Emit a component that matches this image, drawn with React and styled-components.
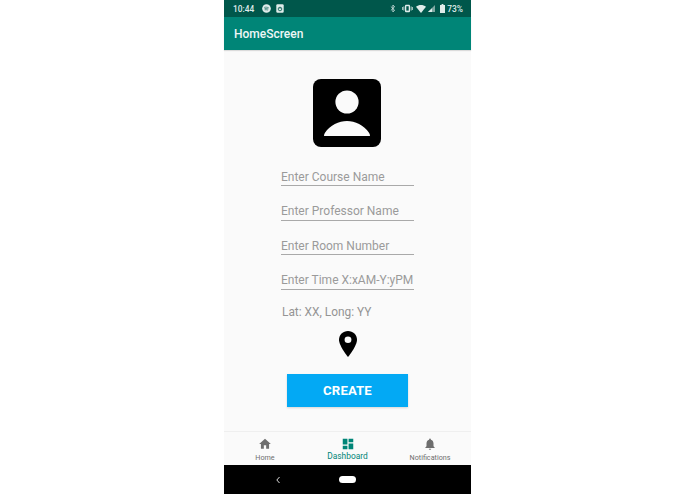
import React from "react";
import styled, { createGlobalStyle } from "styled-components";

const Global = createGlobalStyle`
  html, body { margin: 0; padding: 0; background: #fff; }
  body { font-family: Roboto, "Liberation Sans", sans-serif; }
`;
const Page = styled.div`
  width: 695px; height: 494px; display: flex; justify-content: center; overflow: hidden; background: #fff;
`;
const Phone = styled.div`
  width: 247px; height: 494px; display: flex; flex-direction: column; background: #fafafa;
`;
const StatusBar = styled.div`
  height: 17px; background: #00574b; display: flex; align-items: center; justify-content: space-between;
  padding: 0 8px 0 9px; color: #dfecea; font-size: 8.4px; font-weight: 500; flex: none;
`;
const StatusGroup = styled.div`
  display: flex; align-items: center; gap: ${p => p.$gap || 4}px;
`;
const Clock = styled.span`
  margin-right: 3px;
`;
const AppBar = styled.div`
  height: 33px; background: #008577; color: #eef7f6; display: flex; align-items: center;
  padding-left: 10px; font-size: 12px; font-weight: 500; flex: none;
  box-shadow: 0 1px 1px rgba(0,0,0,.12);
`;
const Content = styled.div`
  flex: 1; display: flex; flex-direction: column; align-items: center; padding-top: 29px; min-height: 0;
`;
const Avatar = styled.svg`
  width: 68px; height: 68px; display: block; margin: 0 1px 21px 0;
`;
const Form = styled.div`
  width: 133px; display: flex; flex-direction: column; gap: 16px;
`;
const Field = styled.div`
  height: 17.4px; border-bottom: 1.3px solid #a9a9a9; color: #9a9a9a; font-size: 12px; line-height: 18px;
  white-space: nowrap; box-sizing: content-box;
`;
const LatLong = styled.div`
  width: 132px; padding-left: 1px; margin-top: 14px; height: 16px; line-height: 16px; color: #949494; font-size: 11.9px;
`;
const Pin = styled.svg`
  width: 18px; height: 26px; display: block; margin-top: 11px;
`;
const CreateButton = styled.button`
  width: 121px; height: 33px; margin-top: 17px; border: none; border-radius: 0; background: #03a9f4; color: #fff;
  font-family: inherit; font-weight: 700; font-size: 13.2px; letter-spacing: 0.1px; padding: 1px 0 0;
  box-shadow: 0 1px 2px rgba(0,0,0,.15);
`;
const BottomNav = styled.div`
  height: 34px; flex: none; display: grid; grid-template-columns: 82px 83px 82px; background: #fafafa;
  border-top: 1px solid #efefef; box-sizing: border-box;
`;
const NavItem = styled.div`
  display: flex; flex-direction: column; align-items: center; padding-top: 5px;
  color: ${p => (p.$active ? "#008577" : "#6e6e6e")};
`;
const NavIcon = styled.svg`
  width: 14px; height: 14px; display: block; fill: currentColor;
`;
const NavLabel = styled.span`
  font-size: ${p => (p.$active ? "8.4px" : "7.2px")}; line-height: 9px; margin-top: ${p => (p.$active ? "1px" : "2px")}; white-space: nowrap;
`;
const SystemBar = styled.div`
  height: 29px; flex: none; background: #000; display: flex; align-items: center; position: relative; padding-left: 51px; gap: 58px;
`;
const Back = styled.svg`
  width: 6px; height: 8px; display: block;
`;
const HomePill = styled.div`
  width: 17px; height: 7px; border-radius: 4px; background: #fff;
`;

const Ic = styled.svg`
  display: block; fill: #dfecea; margin-left: ${p => p.$ml || 0}px;
`;

export default function App() {
  return (
    <Page>
      <Global />
      <Phone>
        <StatusBar>
          <StatusGroup $gap={5}>
            <Clock>10:44</Clock>
            <Ic width="9" height="9" viewBox="0 0 10 10"><circle cx="5" cy="5" r="4.8" /><path d="M2.500 3.800c1.800-.5 3.400-.3 5 .5M2.800 5.200c1.500-.4 2.900-.2 4.200.4M3 6.500c1.200-.3 2.300-.2 3.400.3" stroke="#00574b" strokeWidth=".7" fill="none" /></Ic>
            <Ic width="8" height="9" viewBox="0 0 8 9"><rect x=".3" y=".3" width="7.400" height="8.400" rx="1.200" /><circle cx="4" cy="5" r="1.800" fill="none" stroke="#00574b" strokeWidth=".8" /><path d="M4 5V3.500" stroke="#00574b" strokeWidth=".7" /></Ic>
          </StatusGroup>
          <StatusGroup $gap={2}>
            <Ic width="6" height="9" viewBox="0 0 7 10"><path d="M1 2.700 5.400 7 3.400 9V1l2 2L1 7.300" fill="none" stroke="#dfecea" strokeWidth=".9" /></Ic>
            <Ic $ml={4} width="11" height="9" viewBox="0 0 11 9"><rect x="3" y="0.700" width="5" height="7.600" rx="1" /><rect x="4.300" y="2.200" width="2.400" height="4.400" fill="#00574b" /><path d="M.6 3v3M10.400 3v3M1.900 2.400v4.200M9.100 2.400v4.200" stroke="#dfecea" strokeWidth=".8" /></Ic>
            <Ic $ml={1} width="10" height="8" viewBox="0 0 10 8"><path d="M0 1.800C2.800-.6 7.200-.6 10 1.800L5 8z" /></Ic>
            <Ic width="7" height="7" viewBox="0 0 7 7"><path d="M7 0v7H0z" fill="#7fa8a2" /><path d="M4 3.200V7H0z" /></Ic>
            <Ic $ml={3} width="5" height="9" viewBox="0 0 5 9"><path d="M1.600 0h1.800v1H5v8H0V1h1.600z" /></Ic>
            <span>73%</span>
          </StatusGroup>
        </StatusBar>
        <AppBar>HomeScreen</AppBar>
        <Content>
          <Avatar viewBox="0 0 68 68">
            <rect width="68" height="68" rx="8" fill="#000" />
            <circle cx="34" cy="23" r="11.600" fill="#fafafa" />
            <path d="M11 57c0-1 .3-2.200 1-3.200C17 46 26 42 34 42s17 4 22 11.800c.7 1 1 2.200 1 3.200z" fill="#fafafa" />
          </Avatar>
          <Form>
            <Field>Enter Course Name</Field>
            <Field>Enter Professor Name</Field>
            <Field>Enter Room Number</Field>
            <Field>Enter Time X:xAM-Y:yPM</Field>
          </Form>
          <LatLong>Lat: XX, Long: YY</LatLong>
          <Pin viewBox="0 0 18 27" preserveAspectRatio="none">
            <path d="M9 0C4 0 0 4 0 9c0 6.500 9 18 9 18s9-11.500 9-18c0-5-4-9-9-9z" fill="#000" />
            <circle cx="9" cy="9" r="3.400" fill="#fafafa" />
          </Pin>
          <CreateButton>CREATE</CreateButton>
        </Content>
        <BottomNav>
          <NavItem>
            <NavIcon viewBox="0 0 24 24"><path d="M10 20v-6h4v6h5v-8h3L12 3 2 12h3v8z" /></NavIcon>
            <NavLabel>Home</NavLabel>
          </NavItem>
          <NavItem $active>
            <NavIcon viewBox="0 0 24 24"><path d="M3 13h8V3H3zm0 8h8v-6H3zm10 0h8V11h-8zm0-18v6h8V3z" /></NavIcon>
            <NavLabel $active>Dashboard</NavLabel>
          </NavItem>
          <NavItem>
            <NavIcon viewBox="0 0 24 24"><path d="M12 22c1.100 0 2-.9 2-2h-4c0 1.100.9 2 2 2zm6-6v-5c0-3.100-1.600-5.600-4.500-6.300V4c0-.8-.7-1.500-1.500-1.500s-1.500.7-1.500 1.500v.7C7.600 5.400 6 7.900 6 11v5l-2 2v1h16v-1z" /></NavIcon>
            <NavLabel>Notifications</NavLabel>
          </NavItem>
        </BottomNav>
        <SystemBar>
          <Back viewBox="0 0 6 8"><path d="M4.500 1 1.800 4l2.700 3" fill="none" stroke="#ddd" strokeWidth="1" /></Back>
          <HomePill />
        </SystemBar>
      </Phone>
    </Page>
  );
}
